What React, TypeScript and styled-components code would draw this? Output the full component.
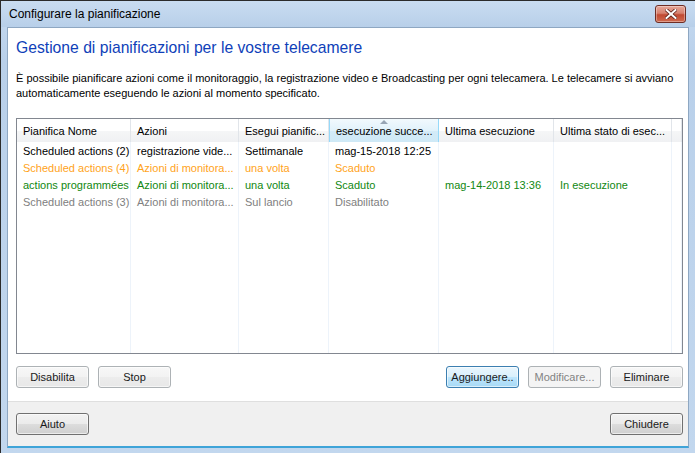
import React from 'react';
import styled, { createGlobalStyle } from 'styled-components';

const GlobalStyle = createGlobalStyle`
  html, body {
    margin: 0;
    padding: 0;
    background: #1e1e1e;
  }
  body {
    font-family: "Liberation Sans", Arial, sans-serif;
  }
`;

const Window = styled.div`
  width: 695px;
  height: 453px;
  box-sizing: border-box;
  display: flex;
  flex-direction: column;
  border-top: 1px solid #2b2b2b;
  border-left: 1px solid #2b2b2b;
  background: linear-gradient(#c6daf0, #b9d0ea 60px, #c2d7ee);
  overflow: hidden;
`;

const TitleBar = styled.div`
  height: 26px;
  display: flex;
  align-items: center;
  justify-content: space-between;
  padding: 0 9px 0 8px;
  background: linear-gradient(#c9dcf1, #b8cfe9);
`;

const TitleText = styled.span`
  font-size: 12px;
  color: #000;
`;

const CloseButton = styled.div`
  width: 29px;
  height: 16px;
  border: 1px solid #6e2d24;
  border-radius: 3px;
  background: linear-gradient(#e6a89a, #d7826f 45%, #c14a32 55%, #cf6a4f);
  display: flex;
  align-items: center;
  justify-content: center;
  box-shadow: inset 0 0 0 1px rgba(255, 255, 255, 0.35);
`;

const Frame = styled.div`
  flex: 1;
  display: flex;
  flex-direction: column;
  margin: 0 6px 5px 6px;
  border: 1px solid #8ea7c2;
  border-bottom: 2px solid #3fa4d8;
  min-height: 0;
`;

const Main = styled.div`
  height: 373px;
  box-sizing: border-box;
  background: #fff;
  padding: 10px 5px 0 8px;
  display: flex;
  flex-direction: column;
`;

const Heading = styled.h1`
  margin: 0;
  font-weight: normal;
  font-size: 15.7px;
  line-height: 20px;
  color: #0f3fb9;
`;

const Description = styled.p`
  margin: 13px 0 0;
  font-size: 11px;
  line-height: 15px;
  color: #000;
`;

const List = styled.div`
  margin-top: 17px;
  width: 667px;
  height: 236px;
  box-sizing: border-box;
  border: 1px solid #828790;
  display: flex;
  flex-direction: column;
  overflow: hidden;
`;

const COLS = [114, 108, 90, 110, 115, 118, 10];

const HeaderRow = styled.div`
  display: flex;
  height: 23px;
  flex-shrink: 0;
`;

const HeaderCell = styled.div<{ $w: number; $sorted?: boolean }>`
  position: relative;
  width: ${(p) => p.$w}px;
  box-sizing: border-box;
  padding: 0 0 0 6px;
  display: flex;
  align-items: center;
  font-size: 11px;
  white-space: nowrap;
  overflow: hidden;
  color: #000;
  border-right: 1px solid ${(p) => (p.$sorted ? '#96d9f9' : '#e1e5ea')};
  border-left: ${(p) => (p.$sorted ? '1px solid #96d9f9' : '0')};
  background: ${(p) => (p.$sorted
    ? 'linear-gradient(#f2f9fd, #e1f2fb 50%, #d3ebf8 51%, #cfe9f6)'
    : 'linear-gradient(#ffffff, #ffffff 50%, #f5f6f7 51%, #f0f1f3)')};
`;

const SortArrow = styled.svg`
  position: absolute;
  top: 1px;
  left: 50%;
  margin-left: -4px;
`;

const Body = styled.div`
  flex: 1;
  position: relative;
  padding-top: 1px;
`;

const GridLines = styled.div`
  position: absolute;
  inset: 0;
  display: flex;
  pointer-events: none;
`;

const GridCol = styled.div<{ $w: number }>`
  width: ${(p) => p.$w}px;
  box-sizing: border-box;
  border-right: 1px solid #edf3fa;
`;

const Row = styled.div<{ $color: string }>`
  position: relative;
  display: flex;
  height: 17px;
  color: ${(p) => p.$color};
`;

const Cell = styled.div<{ $w: number }>`
  width: ${(p) => p.$w}px;
  box-sizing: border-box;
  padding-left: 6px;
  font-size: 11px;
  line-height: 17px;
  white-space: nowrap;
  overflow: hidden;
`;

const ButtonRow = styled.div`
  display: flex;
  align-items: center;
  gap: 9px;
  margin-top: 12px;
  width: 667px;
`;

const Spacer = styled.div`
  flex: 1;
`;

type Variant = 'normal' | 'flat' | 'disabled' | 'default';

const Button = styled.button<{ $variant?: Variant }>`
  width: 73px;
  height: 22px;
  box-sizing: border-box;
  padding: 0;
  border-radius: 3px;
  font-family: "Liberation Sans", Arial, sans-serif;
  font-size: 11px;
  cursor: default;
  border: 1px solid
    ${(p) => {
    if (p.$variant === 'disabled' || p.$variant === 'flat') return '#adb2b5';
    if (p.$variant === 'default') return '#3c7fb1';
    return '#707070';
  }};
  color: ${(p) => (p.$variant === 'disabled' ? '#838383' : '#1a1a1a')};
  background: ${(p) => {
    if (p.$variant === 'disabled') return '#f4f4f4';
    if (p.$variant === 'flat') return 'linear-gradient(#f7f7f7, #f2f2f2 50%, #ececec 51%, #e8e8e8)';
    if (p.$variant === 'default') return 'linear-gradient(#eaf6fd, #d9f0fc 50%, #bee6fd 51%, #a7d9f5)';
    return 'linear-gradient(#f2f2f2, #ebebeb 50%, #dddddd 51%, #cfcfcf)';
  }};
  box-shadow: ${(p) => (p.$variant === 'disabled' ? 'none' : 'inset 0 0 0 1px rgba(255,255,255,0.6)')};
`;

const Footer = styled.div`
  flex: 1;
  background: #f0f0f0;
  border-top: 1px solid #dfdfdf;
  display: flex;
  align-items: center;
  justify-content: space-between;
  padding: 0 5px 0 8px;
`;

type Item = {
  color: string;
  cells: string[];
};

const headers = [
  'Pianifica Nome',
  'Azioni',
  'Esegui pianific...',
  'esecuzione succe...',
  'Ultima esecuzione',
  'Ultima stato di esec...',
  '',
];

const items: Item[] = [
  {
    color: '#000000',
    cells: ['Scheduled actions (2)', 'registrazione vide...', 'Settimanale', 'mag-15-2018 12:25', '', ''],
  },
  {
    color: '#ffa31a',
    cells: ['Scheduled actions (4)', 'Azioni di monitora...', 'una volta', 'Scaduto', '', ''],
  },
  {
    color: '#118811',
    cells: ['actions programmées', 'Azioni di monitora...', 'una volta', 'Scaduto', 'mag-14-2018 13:36', 'In esecuzione'],
  },
  {
    color: '#808080',
    cells: ['Scheduled actions (3)', 'Azioni di monitora...', 'Sul lancio', 'Disabilitato', '', ''],
  },
];

export default function App() {
  return (
    <>
      <GlobalStyle />
      <Window>
        <TitleBar>
          <TitleText>Configurare la pianificazione</TitleText>
          <CloseButton>
            <svg width="12" height="10" viewBox="0 0 12 10">
              <path
                d="M1.5 1 L10.5 9 M10.5 1 L1.5 9"
                stroke="#5a2018"
                strokeWidth="3.6"
                strokeLinecap="square"
              />
              <path
                d="M1.5 1 L10.5 9 M10.5 1 L1.5 9"
                stroke="#ffffff"
                strokeWidth="2"
                strokeLinecap="square"
              />
            </svg>
          </CloseButton>
        </TitleBar>
        <Frame>
          <Main>
            <Heading>Gestione di pianificazioni per le vostre telecamere</Heading>
            <Description>
              È possibile pianificare azioni come il monitoraggio, la registrazione video e Broadcasting per ogni
              telecamera. Le telecamere si avviano automaticamente eseguendo le azioni al momento specificato.
            </Description>
            <List>
              <HeaderRow>
                {headers.map((h, i) => (
                  <HeaderCell key={i} $w={COLS[i]} $sorted={i === 3}>
                    {i === 3 && (
                      <SortArrow width="8" height="4" viewBox="0 0 8 4">
                        <path d="M0 4 L4 0 L8 4 Z" fill="#97a5b4" />
                      </SortArrow>
                    )}
                    {h}
                  </HeaderCell>
                ))}
              </HeaderRow>
              <Body>
                <GridLines>
                  {COLS.map((w, i) => (
                    <GridCol key={i} $w={w} />
                  ))}
                </GridLines>
                {items.map((it, r) => (
                  <Row key={r} $color={it.color}>
                    {it.cells.map((c, i) => (
                      <Cell key={i} $w={COLS[i]}>
                        {c}
                      </Cell>
                    ))}
                  </Row>
                ))}
              </Body>
            </List>
            <ButtonRow>
              <Button $variant="flat">Disabilita</Button>
              <Button $variant="flat">Stop</Button>
              <Spacer />
              <Button $variant="default">Aggiungere..</Button>
              <Button $variant="disabled">Modificare...</Button>
              <Button $variant="flat">Eliminare</Button>
            </ButtonRow>
          </Main>
          <Footer>
            <Button>Aiuto</Button>
            <Button>Chiudere</Button>
          </Footer>
        </Frame>
      </Window>
    </>
  );
}
